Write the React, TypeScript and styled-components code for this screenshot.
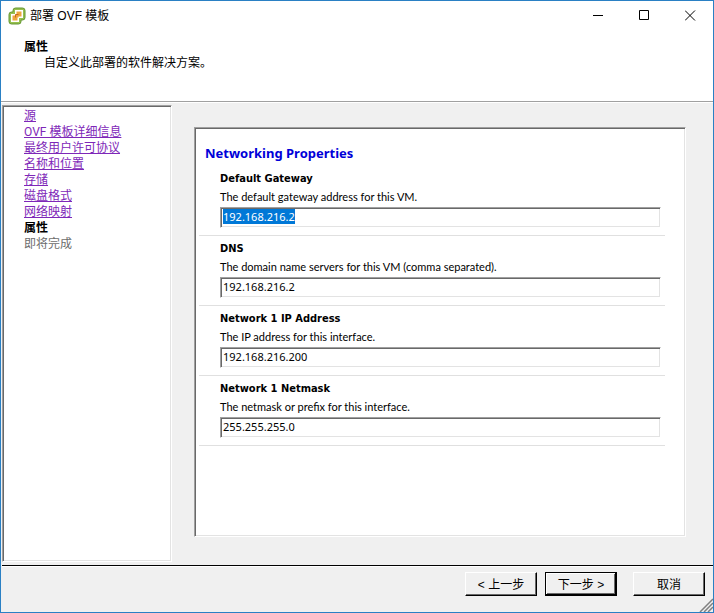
import React, { useEffect, useRef } from "react";
import styled, { createGlobalStyle, css } from "styled-components";

const Global = createGlobalStyle`
  * { box-sizing: border-box; }
  body { margin: 0; background: #f0f0f0; }
`;

const formFont = `"Noto Sans", "Noto Sans CJK SC", sans-serif`;
const hintFont = `Lato, "Noto Sans CJK SC", sans-serif`;
const boldFont = `"DejaVu Sans Condensed", "Noto Sans CJK SC", sans-serif`;
const cjkFont = `"Liberation Sans", "Noto Sans CJK SC", sans-serif`;

const sunken = css`
  background: #fff;
  border: 1px solid;
  border-color: #a0a0a0 #fff #fff #a0a0a0;
  box-shadow: inset 1px 1px 0 #696969, inset -1px -1px 0 #e3e3e3;
`;

const Dialog = styled.div`
  min-height: 100vh;
  display: flex;
  flex-direction: column;
  border: 1px solid #2a80c4;
  background: #f0f0f0;
  color: #000;
  font: 12px/16px ${cjkFont};
`;

const TitleBar = styled.header`
  display: flex;
  align-items: center;
  height: 29px;
  padding-left: 7px;
  background: #fff;
`;

const Title = styled.h1`
  flex: 1;
  margin: 0 0 0 4px;
  font-size: 12px;
  font-weight: 400;
`;

const CaptionButton = styled.button`
  display: grid;
  place-items: center;
  width: 46px;
  height: 29px;
  padding: 0;
  border: 0;
  background: transparent;
`;

const Banner = styled.section`
  height: 72px;
  padding: 9px 23px;
  background: #fff;
  border-bottom: 1px solid #a0a0a0;
  box-shadow: 0 1px 0 #fff;
`;

const BannerTitle = styled.h2`
  margin: 0;
  font-size: 12px;
  font-weight: 700;
`;

const BannerText = styled.p`
  margin: 0 0 0 20px;
`;

const Main = styled.main`
  flex: 1;
  display: flex;
  padding: 3px 27px 3px 1px;
`;

const Sidebar = styled.nav`
  ${sunken}
  width: 170px;
  padding: 2px 21px;
  font-family: Roboto, "Noto Sans CJK SC", sans-serif;
`;

const StepList = styled.ol`
  margin: 0;
  padding: 0;
  list-style: none;
`;

const StepLink = styled.a`
  color: #7e27b8;
  text-decoration: underline;
`;

const CurrentStep = styled.strong`
  font-weight: 700;
`;

const PendingStep = styled.span`
  color: #6d6d6d;
`;

const Panel = styled.form`
  ${sunken}
  flex: 1;
  margin: 22px 0 25px 22px;
  padding: 17px 20px 17px 4px;
  font: 11px/16px ${formFont};
`;

const PanelTitle = styled.h3`
  margin: 0 0 5px;
  padding-left: 6px;
  color: #0000d8;
  font: 700 13px/16px ${formFont};
`;

const Field = styled.div`
  display: flex;
  flex-direction: column;
  height: 70px;
  padding: 5px 4px 0 21px;
  border-bottom: 1px solid #e0e0e0;
`;

const FieldLabel = styled.label`
  font-family: ${boldFont};
  font-weight: 700;
`;

const FieldHint = styled.span`
  margin-top: 2px;
  font-family: ${hintFont};
`;

const FieldInput = styled.input`
  ${sunken}
  width: 100%;
  height: 21px;
  margin-top: 2px;
  padding: 0 2px 2px;
  border-radius: 0;
  outline: none;
  color: #000;
  font: 11px/13px ${formFont};

  &::selection {
    background: #0078d7;
    color: #fff;
  }
`;

const Footer = styled.footer`
  display: flex;
  justify-content: flex-end;
  align-items: flex-start;
  gap: 8px;
  height: 47px;
  margin-left: 1px;
  padding: 6px 8px 0;
  position: relative;
  border-top: 1px solid #000;
  box-shadow: inset 0 1px 0 #fff;
`;

const WizardButton = styled.button<{ $primary?: boolean; $apart?: boolean }>`
  width: 72px;
  height: 24px;
  margin-left: ${(p) => (p.$apart ? 8 : 0)}px;
  padding: 1px 0 0;
  border: 1px solid;
  border-color: ${(p) => (p.$primary ? "#000" : "#fff #000 #000 #fff")};
  border-radius: 0;
  background: #f0f0f0;
  box-shadow: ${(p) =>
    p.$primary
      ? "inset -1px -1px 0 #000, inset 1px 1px 0 #fff, inset -2px -2px 0 #696969"
      : "inset -1px -1px 0 #696969"};
  color: #000;
  font: 12px/16px ${cjkFont};
`;

const Grip = styled.svg`
  position: absolute;
  right: 0;
  bottom: 0;
`;

const Logo = () => (
  <svg width="18" height="18" viewBox="0 0 18 18" aria-hidden="true">
    <path
      d="M7.500 1h7A2.500 2.500 0 0 1 17 3.500v7a2.500 2.500 0 0 1-2.500 2.500H13v1.500a2.500 2.500 0 0 1-2.500 2.500h-7A2.500 2.500 0 0 1 1 14.500v-7A2.500 2.500 0 0 1 3.500 5H5V3.500A2.500 2.500 0 0 1 7.500 1z"
      fill="#97c04e"
      stroke="#629530"
    />
    <path d="M7 3h8v8h-4v4H3V7h4z" fill="#fff" />
    <path d="M8.500 4.500h5v5h-3v1h-1v3h-5v-5h3v-1h1z" fill="#eda63c" />
    <path d="M7.500 10.500v-3h3" fill="none" stroke="#c9661e" />
  </svg>
);

const doneSteps = ["源", "OVF 模板详细信息", "最终用户许可协议", "名称和位置", "存储", "磁盘格式", "网络映射"];

const fields = [
  { id: "gateway", label: "Default Gateway", hint: "The default gateway address for this VM.", value: "192.168.216.2" },
  { id: "dns", label: "DNS", hint: "The domain name servers for this VM (comma separated).", value: "192.168.216.2" },
  { id: "ip", label: "Network 1 IP Address", hint: "The IP address for this interface.", value: "192.168.216.200" },
  { id: "netmask", label: "Network 1 Netmask", hint: "The netmask or prefix for this interface.", value: "255.255.255.0" },
];

export default function App() {
  const first = useRef<HTMLInputElement>(null);

  useEffect(() => {
    first.current?.focus();
    first.current?.select();
  }, []);

  return (
    <>
      <Global />
      <Dialog>
        <TitleBar>
          <Logo />
          <Title>部署 OVF 模板</Title>
          <CaptionButton type="button" aria-label="最小化">
            <svg width="11" height="11" viewBox="0 0 11 11" stroke="#000" fill="none">
              <path d="M0 5.5h10" />
            </svg>
          </CaptionButton>
          <CaptionButton type="button" aria-label="最大化">
            <svg width="11" height="11" viewBox="0 0 11 11" stroke="#000" fill="none">
              <path d="M.5.5h9v9h-9z" />
            </svg>
          </CaptionButton>
          <CaptionButton type="button" aria-label="关闭">
            <svg width="11" height="11" viewBox="0 0 11 11" stroke="#000" fill="none">
              <path d="M0 .5l10 10M10 .5l-10 10" />
            </svg>
          </CaptionButton>
        </TitleBar>
        <Banner>
          <BannerTitle>属性</BannerTitle>
          <BannerText>自定义此部署的软件解决方案。</BannerText>
        </Banner>
        <Main>
          <Sidebar>
            <StepList>
              {doneSteps.map((s) => (
                <li key={s}>
                  <StepLink href="#">{s}</StepLink>
                </li>
              ))}
              <li>
                <CurrentStep>属性</CurrentStep>
              </li>
              <li>
                <PendingStep>即将完成</PendingStep>
              </li>
            </StepList>
          </Sidebar>
          <Panel>
            <PanelTitle>Networking Properties</PanelTitle>
            {fields.map((f, i) => (
              <Field key={f.id}>
                <FieldLabel htmlFor={f.id}>{f.label}</FieldLabel>
                <FieldHint id={`${f.id}-hint`}>{f.hint}</FieldHint>
                <FieldInput
                  id={f.id}
                  ref={i === 0 ? first : undefined}
                  aria-describedby={`${f.id}-hint`}
                  defaultValue={f.value}
                />
              </Field>
            ))}
          </Panel>
        </Main>
        <Footer>
          <WizardButton type="button">&lt; 上一步</WizardButton>
          <WizardButton type="button" $primary>下一步 &gt;</WizardButton>
          <WizardButton type="button" $apart>取消</WizardButton>
          <Grip width="14" height="14" viewBox="0 0 14 14" stroke="#808080" strokeWidth="1.5" aria-hidden="true">
            <path d="M1 14L14 1M5 14l9-9M9 14l5-5" />
          </Grip>
        </Footer>
      </Dialog>
    </>
  );
}
